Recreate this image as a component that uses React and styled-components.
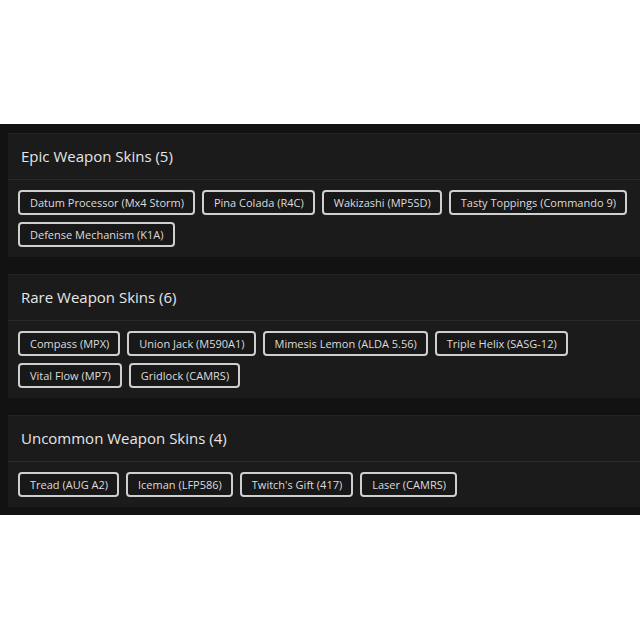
import React from "react";
import styled, { createGlobalStyle } from "styled-components";

const GlobalStyle = createGlobalStyle`
  html, body {
    margin: 0;
    padding: 0;
    background: #ffffff;
  }
  body {
    font-family: "Open Sans", "Noto Sans", "Liberation Sans", sans-serif;
    overflow: hidden;
  }
`;

/* The board is wider than the window, so its cards run off the right edge */
const Page = styled.div`
  padding-top: 124px;
  width: 664px;
`;

const Board = styled.section`
  background: #121212;
  padding: 9px 0 8px 8px;
  display: flex;
  flex-direction: column;
  gap: 17px;
`;

const Card = styled.article`
  background: #1b1b1b;
  border-top: 1px solid #232323;
`;

const CardHeader = styled.header`
  height: 46px;
  box-sizing: border-box;
  display: flex;
  align-items: center;
  padding: 0 13px 1px;
  border-bottom: 1px solid #2a2a2a;
`;

const Title = styled.h2`
  margin: 0;
  font-size: 15px;
  font-weight: 500;
  color: #e6e6e6;
`;

const ChipList = styled.ul`
  list-style: none;
  margin: 0;
  padding: 10px;
  display: flex;
  flex-wrap: wrap;
  gap: 7px;
`;

const Chip = styled.li`
  height: 25px;
  box-sizing: border-box;
  border: 2px solid #cfcfcf;
  border-radius: 4px;
  padding: 0 9px 0 10px;
  display: flex;
  align-items: center;
  font-size: 11px;
  color: #dcdcdc;
  background: #181818;
  white-space: nowrap;
`;

const groups = [
  {
    name: "Epic Weapon Skins",
    skins: [
      "Datum Processor (Mx4 Storm)",
      "Pina Colada (R4C)",
      "Wakizashi (MP5SD)",
      "Tasty Toppings (Commando 9)",
      "Defense Mechanism (K1A)",
    ],
  },
  {
    name: "Rare Weapon Skins",
    skins: [
      "Compass (MPX)",
      "Union Jack (M590A1)",
      "Mimesis Lemon (ALDA 5.56)",
      "Triple Helix (SASG-12)",
      "Vital Flow (MP7)",
      "Gridlock (CAMRS)",
    ],
  },
  {
    name: "Uncommon Weapon Skins",
    skins: [
      "Tread (AUG A2)",
      "Iceman (LFP586)",
      "Twitch's Gift (417)",
      "Laser (CAMRS)",
    ],
  },
];

export default function App() {
  return (
    <Page>
      <GlobalStyle />
      <Board>
        {groups.map((g) => (
          <Card key={g.name}>
            <CardHeader>
              <Title>
                {g.name} ({g.skins.length})
              </Title>
            </CardHeader>
            <ChipList>
              {g.skins.map((s) => (
                <Chip key={s}>{s}</Chip>
              ))}
            </ChipList>
          </Card>
        ))}
      </Board>
    </Page>
  );
}
